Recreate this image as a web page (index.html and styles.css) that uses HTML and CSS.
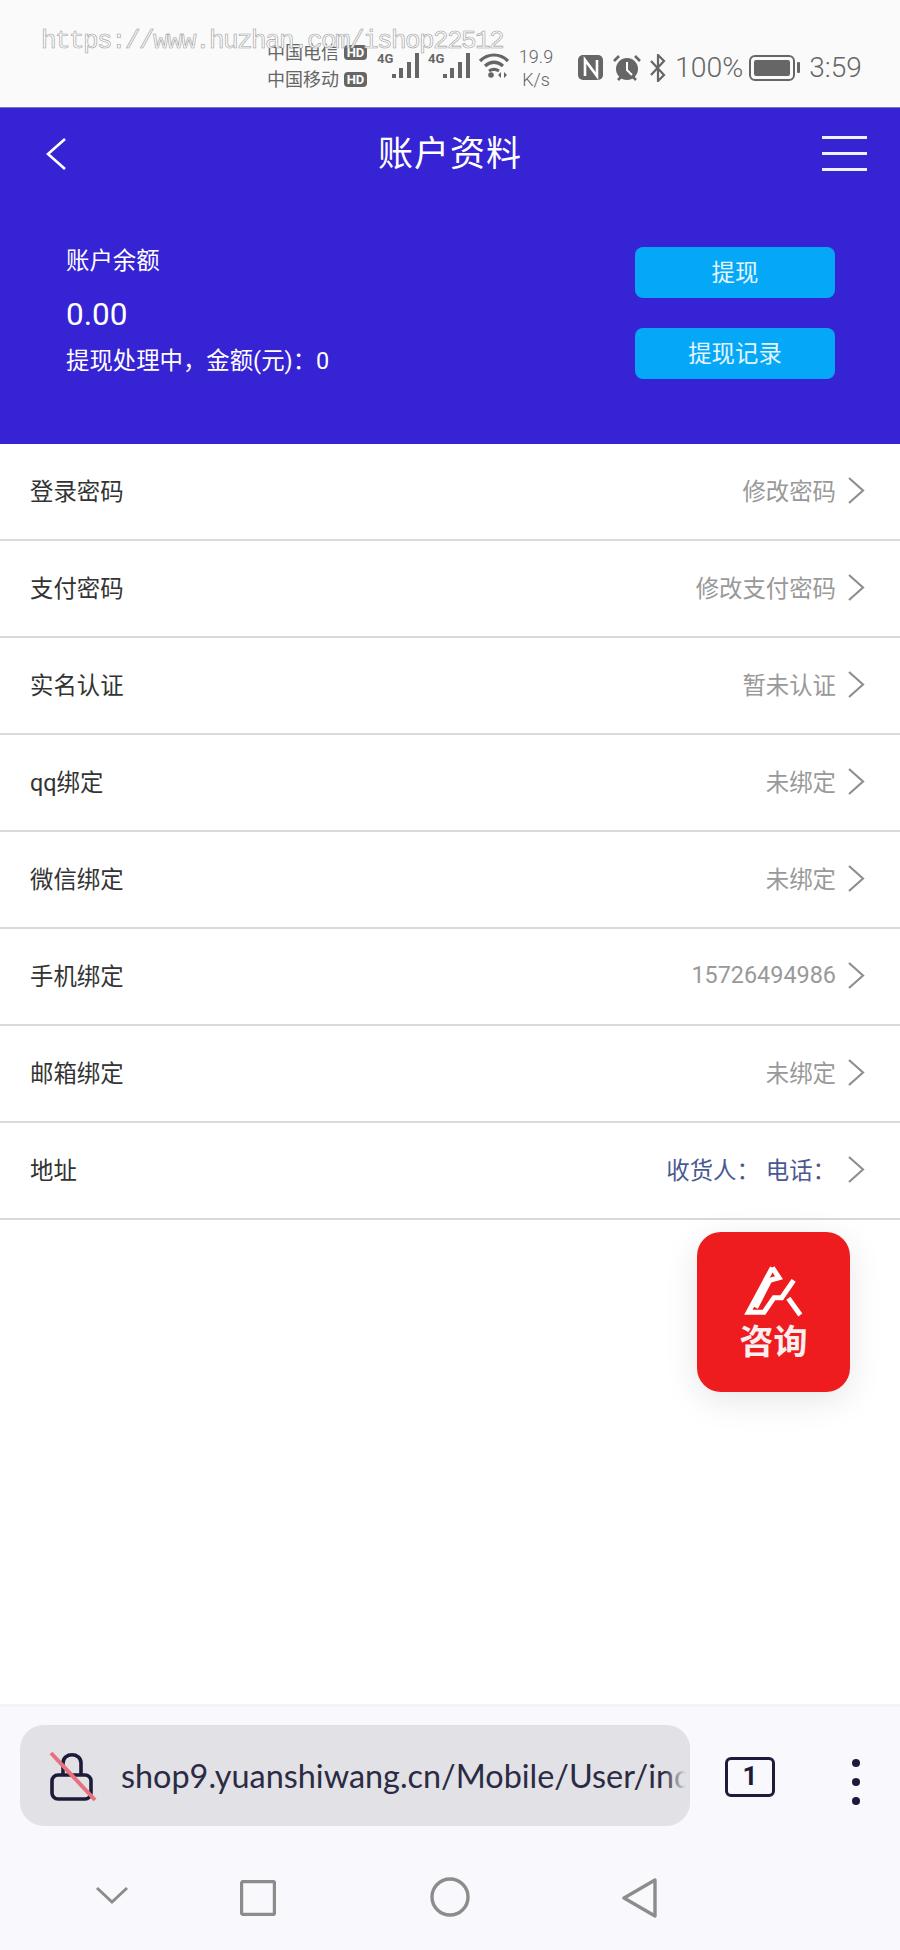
FILE: index.html
```html
<!DOCTYPE html>
<html lang="zh-CN">
<head>
<meta charset="utf-8">
<title>账户资料</title>
<link rel="stylesheet" href="styles.css">
</head>
<body>
<div class="page">
  <div class="watermark">https://www.huzhan.com/ishop22512</div>

  <div class="statusbar">
    <div class="carriers">
      <div class="carrier"><span>中国电信</span><b class="hd">HD</b></div>
      <div class="carrier"><span>中国移动</span><b class="hd">HD</b></div>
    </div>
    <div class="signal"><span class="g">4G</span>
      <svg class="bars" viewBox="0 0 28 26"><path d="M2 22v4M9 16v10M17 10v16M25 1v25" stroke="#666" stroke-width="4" fill="none"/></svg>
    </div>
    <div class="signal"><span class="g">4G</span>
      <svg class="bars" viewBox="0 0 28 26"><path d="M2 22v4M9 16v10M17 10v16M25 1v25" stroke="#666" stroke-width="4" fill="none"/></svg>
    </div>
    <svg class="wifi" viewBox="0 0 32 26" fill="none" stroke="#666" stroke-width="3.2"><path d="M2 9C10 1 22 1 30 9M7 14c6-5 12-5 18 0M11 19c3-2 7-2 10 0"/><circle cx="13" cy="23" r="2.8" fill="#666" stroke="none"/><path d="M23 20l-3 3 3 3zM26 20l3 3-3 3z" fill="#666" stroke="none"/></svg>
    <div class="speed"><span>19.9</span><span>K/s</span></div>
    <svg class="nfc" viewBox="0 0 26 26"><rect width="25" height="25" rx="5" fill="#666"/><path d="M7 21V5l12 16V5" fill="none" stroke="#fff" stroke-width="2.6"/></svg>
    <svg class="alarm" viewBox="0 0 28 28"><circle cx="14" cy="15" r="11" fill="#666"/><path d="M14 8v8l5 5" fill="none" stroke="#fff" stroke-width="2"/><path d="M1 7l5-5M27 7l-5-5M5 26l3-3M23 26l-3-3" stroke="#666" stroke-width="2.6"/></svg>
    <svg class="bt" viewBox="0 0 18 28" fill="none" stroke="#666" stroke-width="2.2"><path d="M2 7l13 14-6 6V1l6 6L2 21"/></svg>
    <span class="batt-pct">100%</span>
    <div class="battery"><div class="cell"><div class="fill"></div></div><div class="cap"></div></div>
    <span class="clock">3:59</span>
  </div>

  <div class="hero">
    <div class="navbar">
      <svg class="back" viewBox="0 0 20 32" fill="none" stroke="#fff" stroke-width="2.6"><path d="M19 1L2 16l17 15"/></svg>
      <h1 class="title">账户资料</h1>
      <div class="burger"><i></i><i></i><i></i></div>
    </div>
    <div class="balance">
      <div class="balance-info">
        <div class="bal-label">账户余额</div>
        <div class="bal-amount">0.00</div>
        <div class="bal-pending">提现处理中，金额(元)：0</div>
      </div>
      <div class="actions">
        <a class="btn">提现</a>
        <a class="btn">提现记录</a>
      </div>
    </div>
  </div>

  <ul class="list">
    <li class="row"><span class="label">登录密码</span><span class="value">修改密码</span><svg class="chev" viewBox="0 0 17 27"><path d="M1 1l14 12.5L1 26"/></svg></li>
    <li class="row"><span class="label">支付密码</span><span class="value">修改支付密码</span><svg class="chev" viewBox="0 0 17 27"><path d="M1 1l14 12.5L1 26"/></svg></li>
    <li class="row"><span class="label">实名认证</span><span class="value">暂未认证</span><svg class="chev" viewBox="0 0 17 27"><path d="M1 1l14 12.5L1 26"/></svg></li>
    <li class="row"><span class="label">qq绑定</span><span class="value">未绑定</span><svg class="chev" viewBox="0 0 17 27"><path d="M1 1l14 12.5L1 26"/></svg></li>
    <li class="row"><span class="label">微信绑定</span><span class="value">未绑定</span><svg class="chev" viewBox="0 0 17 27"><path d="M1 1l14 12.5L1 26"/></svg></li>
    <li class="row"><span class="label">手机绑定</span><span class="value">15726494986</span><svg class="chev" viewBox="0 0 17 27"><path d="M1 1l14 12.5L1 26"/></svg></li>
    <li class="row"><span class="label">邮箱绑定</span><span class="value">未绑定</span><svg class="chev" viewBox="0 0 17 27"><path d="M1 1l14 12.5L1 26"/></svg></li>
    <li class="row"><span class="label">地址</span><span class="value addr"><span>收货人：</span><span>电话：</span></span><svg class="chev" viewBox="0 0 17 27"><path d="M1 1l14 12.5L1 26"/></svg></li>
  </ul>

  <div class="consult">
    <svg class="consult-logo" viewBox="0 0 270 210" fill="none" stroke="#fff" stroke-width="15"><path d="M130 38L58 172h47l30-44h23l36-52"/><path d="M130 38l20 30-28 8L80 158"/><path d="M178 130l36 50"/></svg>
    <span class="consult-text">咨询</span>
  </div>

  <div class="browser">
    <div class="urlbar">
      <svg class="lock" viewBox="0 0 48 52" fill="none"><path d="M14 27V13C14 2 32 2 32 13v14" stroke="#1d1b3a" stroke-width="3.6"/><rect x="3" y="25" width="39" height="24" rx="6" stroke="#1d1b3a" stroke-width="3.6" fill="#e1e1e6"/><path d="M2 3l44 47" stroke="#e8707f" stroke-width="4"/></svg>
      <span class="url">shop9.yuanshiwang.cn/Mobile/User/index</span>
      <div class="url-fade"></div>
    </div>
    <div class="tabs">1</div>
    <div class="more"><i></i><i></i><i></i></div>
  </div>

  <div class="sysnav">
    <svg class="nav-i nav-chev" viewBox="0 0 34 20"><path d="M2 2l15 14L32 2"/></svg>
    <svg class="nav-i nav-sq" viewBox="0 0 36 36"><rect x="1.5" y="1.5" width="33" height="33" rx="2"/></svg>
    <svg class="nav-i nav-ci" viewBox="0 0 40 40"><circle cx="20" cy="20" r="18"/></svg>
    <svg class="nav-i nav-tr" viewBox="0 0 36 40"><path d="M33 2v36L2 20z"/></svg>
  </div>
</div>
</body>
</html>
```
FILE: styles.css
```css
* { box-sizing: border-box; }
html, body { margin: 0; padding: 0; }
body { font-family: Roboto, "Noto Sans CJK SC", sans-serif; background: #fff; }
.page { position: relative; width: 900px; height: 1950px; display: flex; flex-direction: column; overflow: hidden; background: #fff; }

.watermark { position: absolute; left: 41px; top: 23px; font-family: "Liberation Mono", monospace; font-size: 26px; line-height: 36px; letter-spacing: -1.6px; color: #fbfbfb; -webkit-text-stroke: 0.6px #a0a0a0; white-space: nowrap; z-index: 5; }

.statusbar { height: 107px; flex: none; background: #fafafa; display: flex; align-items: center; padding: 28px 0 0 267px; color: #666; }
.carriers { width: 100px; margin: -3px 9px 0 0; }
.carrier { display: flex; align-items: center; gap: 5px; font-size: 18px; line-height: 27px; white-space: nowrap; }
.hd { width: 23px; height: 15px; border-radius: 4px; background: #666; color: #fff; font: 700 13px/15px Roboto, sans-serif; text-align: center; }
.signal { position: relative; width: 44px; height: 26px; margin: -6px 7px 0 0; }
.signal .g { position: absolute; left: 1px; top: 0; font: 700 13px/13px Roboto, sans-serif; }
.bars { position: absolute; right: 0; bottom: 0; width: 28px; height: 26px; }
.wifi { width: 32px; height: 26px; margin-top: -5px; }
.speed { width: 40px; margin-left: 6px; display: flex; flex-direction: column; align-items: center; font-size: 18px; font-weight: 300; line-height: 23px; }
.nfc { width: 26px; height: 26px; margin-left: 22px; }
.alarm { width: 28px; height: 28px; margin-left: 9px; }
.bt { width: 18px; height: 28px; margin-left: 8px; }
.batt-pct { font-size: 28.4px; font-weight: 300; line-height: 32px; margin-left: 8px; }
.battery { display: flex; align-items: center; gap: 2px; margin-left: 6px; }
.cell { width: 46px; height: 26px; border: 2px solid #666; border-radius: 6px; padding: 3px; }
.fill { height: 100%; background: #666; border-radius: 2px; }
.cap { width: 3px; height: 11px; background: #666; border-radius: 1px; }
.clock { font-size: 28px; font-weight: 300; line-height: 32px; margin-left: 9px; }

.hero { height: 337px; flex: none; background: #3623d4; border-top: 1px solid #7b76b8; color: #fff; }
.navbar { position: relative; height: 91px; display: flex; align-items: center; justify-content: space-between; padding: 0 33px 0 46px; }
.back { width: 20px; height: 32px; }
.title { margin: 3px 0 0; font-size: 35px; line-height: 46px; font-weight: 400; letter-spacing: 1px; flex: 1; text-align: center; padding-left: 12px; }
.burger { width: 45px; display: flex; flex-direction: column; gap: 13px; }
.burger i { display: block; height: 3px; background: #f1effc; }

.balance { display: flex; justify-content: space-between; padding: 0 65px 0 66px; }
.balance-info { padding-top: 46px; }
.bal-label { font-size: 23.4px; line-height: 32px; }
.bal-amount { font-size: 31.5px; line-height: 40px; margin-top: 18px; }
.bal-pending { font-size: 23.4px; line-height: 32px; margin-top: 10px; }
.actions { display: flex; flex-direction: column; gap: 30px; padding-top: 48px; }
.btn { display: block; width: 200px; height: 51px; border-radius: 8px; background: #05a8f7; font-size: 23.4px; line-height: 53px; text-align: center; color: #e4f5ff; }

.list { list-style: none; margin: 0; padding: 0; }
.row { height: 97px; display: flex; align-items: center; padding: 0 35px 2px 30px; border-bottom: 2px solid #d9d9d9; background: #fff; }
.label { flex: 1; font-size: 23.4px; color: #333; margin-bottom: 2px; }
.value { font-size: 23.4px; color: #999; margin-bottom: 2px; }
.addr { display: flex; gap: 6px; color: #4a5a90; }
.chev { width: 17px; height: 27px; margin-left: 12px; fill: none; stroke: #8f8f8f; stroke-width: 2.2; }

.consult { position: absolute; left: 697px; top: 1232px; width: 153px; height: 160px; border-radius: 24px; background: #ee1c1e; box-shadow: 0 8px 34px rgba(0,0,0,.1); display: flex; flex-direction: column; align-items: center; padding-top: 23px; color: #fff; }
.consult-logo { width: 90px; height: 70px; flex: none; }
.consult-text { font-size: 34px; line-height: 44px; font-weight: 700; margin-top: -5px; color: #fbeeee; }

.browser { position: absolute; left: 0; top: 1704px; width: 900px; height: 246px; background: #f9f9fd; border-top: 3px solid #f3f3f5; display: flex; padding: 18px 0 0 20px; }
.urlbar { position: relative; width: 670px; height: 101px; border-radius: 24px; background: #e1e1e6; display: flex; align-items: center; padding-left: 29px; overflow: hidden; }
.lock { width: 48px; height: 52px; flex: none; }
.url { font-family: Lato, sans-serif; font-size: 32.4px; color: #2b2b44; margin-left: 24px; white-space: nowrap; }
.url-fade { position: absolute; right: 0; top: 0; width: 26px; height: 100%; background: linear-gradient(90deg, rgba(225,225,230,0), #e1e1e6 85%); }
.tabs { width: 50px; height: 40px; margin: 32px 0 0 35px; border: 3.5px solid #1d1b3a; border-radius: 6px; font: 700 26px/33px Roboto, sans-serif; color: #1d1b3a; text-align: center; }
.more { display: flex; flex-direction: column; gap: 11px; margin: 34px 0 0 77px; }
.more i { display: block; width: 8px; height: 8px; border-radius: 50%; background: #1d1b3a; }

.sysnav { position: absolute; left: 0; top: 1878px; width: 900px; height: 40px; }
.nav-i { position: absolute; fill: none; stroke: #8c8c8c; stroke-width: 3; }
.nav-chev { left: 95px; top: 8px; width: 34px; height: 20px; }
.nav-sq { left: 240px; top: 2px; width: 36px; height: 36px; stroke-width: 3.4; }
.nav-ci { left: 430px; top: -1px; width: 40px; height: 40px; stroke-width: 3.4; }
.nav-tr { left: 622px; top: 0; width: 36px; height: 40px; stroke-width: 3.4; stroke-linejoin: round; }
```
